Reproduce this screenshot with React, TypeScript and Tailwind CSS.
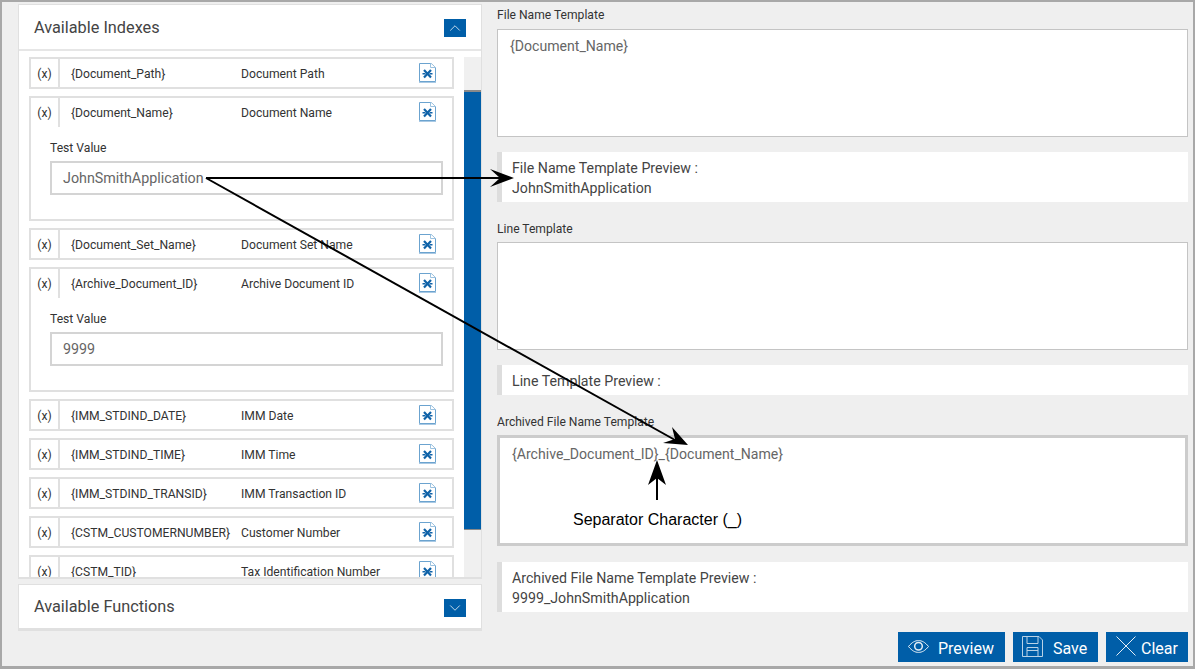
import { ChevronUp, ChevronDown } from "lucide-react";

const rows = [
  { key: "{Document_Path}", label: "Document Path" },
  { key: "{Document_Name}", label: "Document Name", test: "JohnSmithApplication" },
  { key: "{Document_Set_Name}", label: "Document Set Name" },
  { key: "{Archive_Document_ID}", label: "Archive Document ID", test: "9999" },
  { key: "{IMM_STDIND_DATE}", label: "IMM Date" },
  { key: "{IMM_STDIND_TIME}", label: "IMM Time" },
  { key: "{IMM_STDIND_TRANSID}", label: "IMM Transaction ID" },
  { key: "{CSTM_CUSTOMERNUMBER}", label: "Customer Number" },
  { key: "{CSTM_TID}", label: "Tax Identification Number" },
];

function DocIcon() {
  return (
    <svg width="17" height="20" viewBox="0 0 17 20" className="shrink-0">
      <path d="M0.5 0.5H12L16.5 4.5V18.5H0.5Z" fill="#fff" stroke="#6ba3cf" />
      <path d="M11.5 0.5V4.5H16.5" fill="#fff" stroke="#9cc2e0" />
      <path d="M0 19H17V20H0Z" fill="#a9c9e4" />
      <path d="M5 7L12 14.5M12 7L5 14.5" stroke="#0f62a8" strokeWidth="2.2" />
      <path d="M3.5 10.7H6.5M10.5 10.7H13.5" stroke="#0f62a8" strokeWidth="1.4" />
    </svg>
  );
}

function EyeIcon() {
  return (
    <svg width="21" height="13" viewBox="0 0 21 13" fill="none" stroke="#e3edf5" className="mb-[2px] shrink-0">
      <path d="M0.5 6.5C4 2.2 7 0.6 10.5 0.6S17 2.2 20.5 6.5C17 10.8 14 12.4 10.5 12.4S4 10.8 0.5 6.5Z" />
      <circle cx="10.5" cy="6.3" r="3.8" strokeWidth="1.5" />
    </svg>
  );
}

function SaveIcon() {
  return (
    <svg width="21" height="21" viewBox="0 0 21 21" fill="none" stroke="#b9d2e6" className="mb-[2px] shrink-0">
      <path d="M0.5 0.5H17L20.5 4V20.5H0.5Z" />
      <path d="M5 0.5V7.5H16V0.5" />
      <path d="M5 20.5V11.5H16V20.5M5 14.5H16" />
    </svg>
  );
}

function ClearIcon() {
  return (
    <svg width="20" height="20" viewBox="0 0 20 20" fill="none" stroke="#e3edf5" className="mb-[2px] shrink-0">
      <path d="M0.5 0.5L19.5 19.5M19.5 0.5L0.5 19.5" />
    </svg>
  );
}

function IndexRow({ item }: { item: (typeof rows)[number] }) {
  return (
    <div className="shrink-0 border-2 border-[#e0e0e0] bg-white text-[12.15px] text-[#333]">
      <div className={item.test ? "flex h-[29px] items-start" : "flex h-[28px] items-start"}>
        <div className="flex h-full w-[29px] justify-center border-r-2 border-[#e0e0e0] pt-[7px] leading-[16px]">(x)</div>
        <div className="w-[181px] pl-[11px] pt-[7px] leading-[16px] whitespace-nowrap">{item.key}</div>
        <div className="w-[178px] pt-[7px] leading-[16px] whitespace-nowrap">{item.label}</div>
        <div className="pt-[4px]">
          <DocIcon />
        </div>
      </div>
      {item.test && (
        <div className="h-[92px] pl-[19px] pr-[9px] pt-[13px]">
          <div className="leading-[16px]">Test Value</div>
          <div className="mt-[5px] flex h-[34px] items-center border-2 border-[#d4d4d4] pl-[11px] pt-[2px] text-[14.3px] text-[#666]">
            {item.test}
          </div>
        </div>
      )}
    </div>
  );
}

function PanelHeader({ title, open, titleCls }: { title: string; open: boolean; titleCls?: string }) {
  return (
    <div className="flex h-[44px] shrink-0 items-center justify-between pl-[15px] pr-[15px] pt-[1px]">
      <span className={`text-[16.3px] text-[#444] ${titleCls ?? ""}`}>{title}</span>
      <span className="flex h-[18px] w-[22px] items-center justify-center bg-[#005ea8] text-white">
        {open ? <ChevronUp size={18} strokeWidth={1} /> : <ChevronDown size={18} strokeWidth={1} />}
      </span>
    </div>
  );
}

function Template({ label, value, thick, height, labelCls, children }: { label: string; value?: string; thick?: boolean; height: string; labelCls: string; children?: React.ReactNode }) {
  return (
    <div>
      <div className={`h-[27px] text-[12.1px] leading-[16px] text-[#333] ${labelCls}`}>{label}</div>
      <div className={thick ? `relative border-[3px] border-[#cccccc] bg-white pl-[12px] pt-[7px] text-[14.1px] leading-[18px] text-[#666] ${height}` : `border border-[#c4c4c4] bg-white pl-[12px] pt-[7px] text-[14.1px] leading-[18px] text-[#666] ${height}`}>
        {value}
        {children}
      </div>
    </div>
  );
}

function Preview({ label, value, cls }: { label: string; value?: string; cls: string }) {
  return (
    <div className={`border-l-[5px] border-[#dddddd] bg-white pl-[10px] text-[14.2px] leading-[20px] text-[#444] ${cls}`}>
      <div>{label}</div>
      {value && <div>{value}</div>}
    </div>
  );
}

export default function App() {
  return (
    <div className="relative flex h-[669px] w-[1195px] overflow-hidden border-[2px] border-b-[3px] border-[#a8a8a8] bg-[#efefef] pl-[16px] font-['Roboto',sans-serif]">
      <div className="mt-[2px] flex w-[464px] shrink-0 flex-col">
        <div className="flex h-[575px] flex-col overflow-hidden border border-b-2 border-[#e0e0e0] bg-white">
          <div className="border-b-2 border-[#e6e6e6]">
            <PanelHeader title="Available Indexes" open titleCls="mt-[2px]" />
          </div>
          <div className="flex min-h-0 flex-1 pt-[6px]">
            <div className="ml-[10px] flex w-[425px] shrink-0 flex-col gap-[7px] overflow-hidden">
              {rows.map((r) => (
                <IndexRow key={r.key} item={r} />
              ))}
            </div>
            <div className="ml-[10px] flex-1 bg-[#f0f0f0] pt-[33px]">
              <div className="h-[440px] border-t-2 border-b border-[#8a8a8a] bg-[#005ea8]" />
            </div>
          </div>
        </div>
        <div className="mt-[5px] h-[47px] border border-b-[3px] border-[#e0e0e0] bg-white">
          <PanelHeader title="Available Functions" open={false} />
        </div>
      </div>

      <div className="ml-[15px] flex w-[691px] shrink-0 flex-col">
        <Template label="File Name Template" value="{Document_Name}" height="h-[108px]" labelCls="pt-[5px]" />
        <Preview cls="mt-[15px] h-[50px] pt-[6px]" label="File Name Template Preview :" value="JohnSmithApplication" />
        <div className="mt-[13px]">
          <Template label="Line Template" height="h-[108px]" labelCls="pt-[6px]" />
        </div>
        <Preview cls="mt-[15px] h-[30px] pt-[6px]" label="Line Template Preview :" />
        <div className="mt-[13px]">
          <Template label="Archived File Name Template" value="{Archive_Document_ID}_{Document_Name}" thick height="h-[111px]" labelCls="pt-[6px]">
            <div className="absolute left-[73px] top-[72px] font-['Liberation_Sans',sans-serif] text-[16px] leading-[20px] text-black">
              Separator Character (_)
            </div>
          </Template>
        </div>
        <Preview cls="mt-[16px] h-[50px] pt-[6px]" label="Archived File Name Template Preview :" value="9999_JohnSmithApplication" />
        <div className="mt-[20px] flex justify-end gap-[8px] text-[16px] text-white">
          <button className="flex h-[30px] w-[107px] items-center gap-[9px] bg-[#005ea8] pl-[10px]">
            <EyeIcon />
            <span className="pt-[4px]">Preview</span>
          </button>
          <button className="flex h-[30px] w-[85px] items-center gap-[10px] bg-[#005ea8] pl-[9px]">
            <SaveIcon />
            <span className="pt-[4px]">Save</span>
          </button>
          <button className="flex h-[30px] w-[82px] items-center gap-[5px] bg-[#005ea8] pl-[10px]">
            <ClearIcon />
            <span className="pt-[4px]">Clear</span>
          </button>
        </div>
      </div>

      {/* annotation arrows drawn over the page */}
      <svg className="pointer-events-none absolute left-[-2px] top-[-2px]" width="1195" height="669" viewBox="0 0 1195 669">
        <path d="M206 178H505" stroke="#000" strokeWidth="2.2" />
        <path d="M514 178L490 169L500 178L490 187Z" fill="#000" />
        <path d="M206 178L675 440" stroke="#000" strokeWidth="2" />
        <path d="M688 445L672 427L675 439L663 443Z" fill="#000" />
        <path d="M657 500V470" stroke="#000" strokeWidth="2" />
        <path d="M657 460L648 485L657 478L666 485Z" fill="#000" />
      </svg>
    </div>
  );
}
